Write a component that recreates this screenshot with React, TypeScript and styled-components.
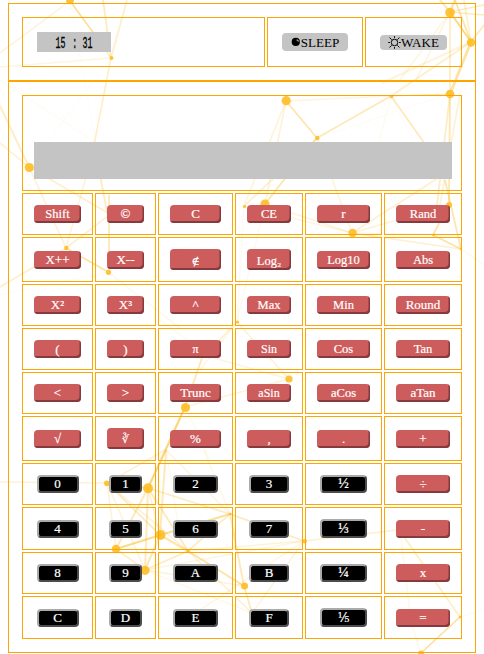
import React from 'react';
import styled, { createGlobalStyle } from 'styled-components';

const Global = createGlobalStyle`
  * { box-sizing: border-box; }
  html, body { margin: 0; background: #fff; overflow: hidden; }
  body { font-family: "Liberation Serif", "DejaVu Serif", serif; }
`;

const Page = styled.main`
  position: relative;
  width: 484px;
  height: 654px;
  padding: 3px 8px 0;
  overflow: hidden;
`;

const Backdrop = styled.svg`
  position: absolute;
  inset: 0;
`;

const Panel = styled.section`
  position: relative;
  width: 468px;
  border: 1px solid #ffa500;
  padding: 13px;
`;

const Header = styled(Panel)`
  display: grid;
  grid-template-columns: 243px 96px 97px;
  gap: 2px;
  height: 78px;
`;

const Body = styled(Panel)`
  height: 572px;
`;

const Cell = styled.div`
  border: 1px solid #ffa500;
  display: flex;
  min-width: 0;
  align-items: center;
  justify-content: center;
`;

const ClockCell = styled(Cell)`
  justify-content: flex-start;
  align-items: flex-start;
  padding: 14px;
`;

const Clock = styled.time`
  display: grid;
  grid-template-columns: 10px 17px 9px;
  justify-content: center;
  justify-items: center;
  width: 74px;
  height: 20px;
  background: #c4c4c4;
  font: 16px/24px "Liberation Mono", monospace;
  color: #000;
`;

const Digits = styled.span`
  display: block;
  width: max-content;
  transform: scaleX(0.52);
  -webkit-text-stroke: 0.3px #000;
`;

const PowerButton = styled.button<{ $height: number; $width: number }>`
  display: flex;
  align-items: center;
  justify-content: center;
  width: ${p => p.$width}px;
  height: ${p => p.$height}px;
  padding: 0;
  border: 0;
  border-radius: 4px;
  background: #c4c4c4;
  color: #000;
  font: 13.1px/15px "Liberation Serif", serif;
`;

const Display = styled.div`
  height: 96px;
  border: 1px solid #ffa500;
  padding: 46px 9px 11px 11px;
  margin-bottom: 2px;
`;

const Screen = styled.output`
  display: block;
  height: 37px;
  background: #c4c4c4;
`;

const Keypad = styled.div`
  display: grid;
  grid-template-columns: 71px 61px 75px 68px 77px 78px;
  grid-template-rows: 42px 45px 42px 42px 42px 45px 42px 43px 42px 43px;
  gap: 2px;
`;

const KeyCell = styled(Cell)<{ $row: number }>`
  align-items: flex-start;
  padding-top: ${p => [11, 13, 11, 11, 11, 13, 11, 12, 11, 12][p.$row]}px;
`;

const Key = styled.button<{ $lift: number; $grow: number; $dy: number; $size: number }>`
  display: flex;
  justify-content: center;
  height: ${p => 18 + p.$grow}px;
  margin: -${p => p.$lift}px 0 0;
  padding: ${p => p.$lift + p.$dy}px 0 0;
  color: #fff;
  font: ${p => p.$size}px/14px "Liberation Serif", "DejaVu Serif", serif;
  -webkit-text-stroke: 0.2px #fff;
  white-space: nowrap;
`;

const OperatorKey = styled(Key)<{ $col: number }>`
  width: ${p => [47, 37, 51, 44, 53, 54][p.$col]}px;
  border: 0;
  border-radius: 4px;
  background: #cd5c5c;
  box-shadow: inset -1.5px -2px 0 #853b3d;
`;

const DigitKey = styled(Key)<{ $col: number }>`
  width: ${p => [42, 33, 45, 40, 47, 47][p.$col]}px;
  border: 2px solid;
  border-color: #aaa #4c4c4c #4c4c4c #aaa;
  border-radius: 4px;
  background: #000;
  padding-top: ${p => p.$lift}px;
`;

type Spec = { t: string; dark?: boolean; lift?: number; grow?: number; dy?: number; size?: number };
const k = (t: string, o: Omit<Spec, 't'> = {}): Spec => ({ t, ...o });
const d = (t: string, o: Omit<Spec, 't'> = {}): Spec => ({ t, dark: true, ...o });

const rows: Spec[][] = [
  [k('Shift', { size: 12.5 }), k('©'), k('C'), k('CE', { size: 12.5 }), k('r'), k('Rand', { size: 12.5 })],
  [k('X++'), k('X--'), k('∉', { lift: 2, grow: 3, dy: 3, size: 11 }), k('Log₂', { lift: 2, grow: 3, dy: 3, size: 12.5 }), k('Log10', { size: 12.5 }), k('Abs', { size: 12.5 })],
  [k('X²'), k('X³'), k('^'), k('Max', { size: 12.5 }), k('Min', { size: 12.5 }), k('Round')],
  [k('(', { dy: 3 }), k(')', { dy: 3 }), k('π', { size: 12 }), k('Sin', { size: 12 }), k('Cos', { size: 12.5 }), k('Tan', { size: 12.5 })],
  [k('<'), k('>'), k('Trunc'), k('aSin', { size: 12 }), k('aCos', { size: 12.5 }), k('aTan')],
  [k('√'), k('∛', { lift: 2, grow: 3, dy: 2, size: 11 }), k('%'), k(','), k('.'), k('+')],
  [d('0'), d('1'), d('2'), d('3'), d('½', { size: 14 }), k('÷')],
  [d('4'), d('5'), d('6'), d('7'), d('⅓', { lift: 1, grow: 1, size: 14 }), k('-')],
  [d('8'), d('9'), d('A'), d('B'), d('¼', { size: 14 }), k('x')],
  [d('C'), d('D'), d('E'), d('F'), d('⅕', { lift: 1, grow: 1, size: 12 }), k('=')],
];

const nodes: number[][] = [
  [70, 0, 4], [111.5, 58, 2], [450, 12.5, 4.8], [471, 42.5, 4.2], [450, 94, 4.3], [391.5, 96.5, 1.8],
  [286.2, 100.7, 4.6], [317.3, 138, 2.2], [29.3, 167.5, 4.6], [244.5, 206.5, 1.6], [265, 204, 4.6],
  [449, 205, 3], [352.6, 233, 4.2], [66.3, 248, 2.2], [108.5, 272.3, 2.6], [237.6, 322, 1.6],
  [289, 379, 3.6], [185.5, 407.5, 4.6], [106.8, 483.3, 2.8], [148, 488.3, 5], [230.5, 514, 1.3],
  [160.5, 535, 5], [116, 549, 4.2], [145, 570.3, 4.6], [188, 551, 1.8], [304.7, 541.3, 2.2],
  [244.5, 586, 3.5], [421, 653.5, 3], [460, 617, 1.2], [461, 249, 1.2], [433.5, 235, 1.3],
];

// x1, y1, x2, y2, opacity, stroke width
const links: number[][] = [
  [70, 1, 95, 35, .45, 1.6], [95, 35, 111, 58, .35, 1.3], [70, 1, 0, 53, .18, 1.5], [103, 0, 111, 58, .28, 1.8],
  [127, 0, 111, 58, .22, 1.8], [111, 58, 0, 67, .14, 1.5], [111, 58, 94, 145, .24, 1.6], [111, 58, 45, 145, .05, 1],
  [70, 1, 96, 145, .04, 1], [0, 80, 95, 142, .07, 1], [0, 106, 29, 167, .26, 1.8], [0, 143, 29, 167, .2, 1.6],
  [29, 167, 66, 248, .2, 1.5], [29, 167, 108, 213, .22, 1.6], [88, 170, 66, 248, .18, 1.4], [99, 170, 108, 217, .28, 1.7],
  [66, 248, 108, 216, .25, 1.5], [66, 248, 108, 272, .4, 1.7], [109, 195, 109, 272, .28, 2], [66, 248, 0, 287, .22, 1.7],
  [108, 272, 180, 328, .1, 1.2], [108, 272, 237, 230, .04, 1], [0, 295, 108, 272, .05, 1],
  [450, 12, 471, 42, .55, 1.8], [450, 12, 484, 15, .28, 1.7], [450, 12, 440, 0, .3, 2.2], [450, 12, 455, 0, .4, 2.2],
  [450, 12, 484, 5, .28, 1.7], [455, 0, 471, 42, .38, 1.7], [464, 0, 471, 42, .22, 1.7], [471, 42, 484, 25, .28, 2],
  [471, 42, 450, 94, .4, 2.8], [471, 42, 391, 96, .22, 2], [471, 42, 382, 83, .15, 2], [450, 12, 450, 94, .25, 1.8],
  [450, 12, 416, 80, .15, 1.5], [450, 12, 400, 80, .12, 1.5], [391, 96, 450, 94, .35, 1.2],
  [391, 96, 286, 101, .14, 1.6], [391, 96, 317, 138, .3, 1.8], [286, 101, 317, 138, .38, 1.6],
  [391, 96, 449, 178, .3, 1.7], [391, 96, 374, 160, .08, 1], [391, 96, 420, 154, .05, 1], [317, 138, 460, 90, .05, 1],
  [317, 138, 265, 204, .35, 1.8], [317, 138, 244, 206, .22, 1.7], [286, 101, 265, 204, .17, 1.7], [286, 101, 244, 206, .15, 1.7],
  [317, 138, 352, 233, .15, 1.6], [450, 94, 437, 205, .25, 1.8], [450, 94, 449, 205, .35, 1.8], [460, 94, 440, 205, .18, 1.7],
  [352, 233, 449, 171, .2, 1.6], [352, 233, 461, 249, .2, 1.6], [352, 233, 265, 204, .17, 1.6], [352, 233, 244, 206, .14, 1.6],
  [352, 233, 449, 205, .17, 1.6], [352, 233, 460, 235, .12, 1.3], [449, 205, 433, 235, .38, 1.7], [433, 235, 461, 249, .4, 1.7],
  [445, 180, 461, 249, .35, 1.8], [461, 249, 484, 265, .1, 1.3], [244, 206, 237, 322, .08, 1.4], [265, 204, 237, 322, .08, 1.3],
  [237, 322, 205, 355, .22, 1.7], [237, 322, 289, 379, .18, 1.5], [203, 355, 289, 379, .15, 1.5], [289, 379, 185, 407, .17, 1.6],
  [203, 355, 185, 407, .33, 1.8], [237, 322, 200, 370, .12, 1.4], [160, 320, 205, 353, .08, 1.2],
  [185, 407, 148, 488, .42, 2.2], [185, 407, 166, 450, .28, 1.7], [185, 407, 210, 460, .08, 1.3],
  [107, 483, 166, 449, .14, 1.3], [107, 483, 148, 488, .3, 1.5], [107, 483, 0, 482, .18, 1.4], [107, 483, 116, 549, .18, 1.5],
  [107, 483, 145, 570, .16, 1.5], [107, 483, 160, 535, .27, 1.8], [107, 483, 188, 551, .2, 1.5],
  [166, 450, 148, 488, .3, 1.6], [166, 450, 160, 535, .3, 2], [166, 450, 107, 483, .12, 1.3], [166, 450, 180, 535, .1, 1.2],
  [166, 450, 230, 514, .15, 1.3], [204, 450, 230, 514, .13, 1.3], [148, 488, 116, 549, .3, 2], [148, 488, 145, 570, .28, 2],
  [148, 488, 188, 551, .3, 1.8], [148, 488, 160, 535, .2, 1.5], [148, 488, 230, 514, .28, 1.6], [160, 535, 116, 549, .38, 2.2],
  [160, 535, 145, 570, .32, 2], [160, 535, 230, 514, .32, 2], [160, 535, 188, 551, .35, 2.2], [116, 549, 230, 514, .22, 1.4],
  [116, 549, 145, 570, .28, 1.5], [145, 570, 188, 551, .28, 1.6], [145, 570, 244, 586, .17, 1.5], [188, 551, 244, 586, .38, 2],
  [188, 551, 230, 514, .3, 1.6], [188, 551, 304, 541, .17, 1.5], [145, 570, 304, 541, .14, 1.4], [230, 514, 304, 541, .28, 1.7],
  [230, 514, 244, 586, .3, 1.9], [188, 551, 252, 613, .2, 1.5], [145, 570, 252, 613, .12, 1.3], [304, 541, 200, 610, .14, 1.5],
  [304, 541, 252, 613, .15, 1.5], [304, 541, 398, 530, .2, 1.7], [244, 586, 252, 613, .32, 1.6],
  [402, 534, 460, 617, .23, 1.7], [400, 530, 411, 622, .1, 1.4], [411, 622, 421, 653, .1, 1.4], [421, 653, 460, 617, .42, 1.7],
  [460, 617, 484, 609, .07, 1],
];

function Constellation() {
  return (
    <Backdrop width="484" height="654" viewBox="0 0 484 654" aria-hidden="true">
      {links.map(([x1, y1, x2, y2, o, w], i) => (
        <line key={i} x1={x1} y1={y1} x2={x2} y2={y2} stroke="#f9b61b" strokeOpacity={o} strokeWidth={w} />
      ))}
      {nodes.map(([x, y, r], i) => (
        <circle key={i} cx={x} cy={y} r={r} fill="#ffbe28" fillOpacity=".92" />
      ))}
    </Backdrop>
  );
}

function MoonIcon() {
  return (
    <svg width="10" height="10" viewBox="0 0 10 10" aria-hidden="true">
      <circle cx="4.8" cy="4.9" r="4.1" fill="#000" />
      <path d="M5.6 2.6h1.2v1h1.4v.9H6.6v-.8h-1Z" fill="#c4c4c4" />
    </svg>
  );
}

function SunIcon() {
  return (
    <svg width="13" height="13" viewBox="0 0 12 12" fill="none" stroke="#000" strokeWidth=".9" aria-hidden="true">
      <circle cx="6" cy="6" r="3" />
      <path d="M6 .2v1.6M6 10.2v1.6M.2 6h1.6M10.2 6h1.6M1.4 1.4l2 2M8.6 8.6l2 2M1.4 10.6l2-2M8.6 3.4l2-2" />
    </svg>
  );
}

export default function App() {
  return (
    <Page>
      <Global />
      <Constellation />
      <Header>
        <ClockCell>
          <Clock><Digits>15</Digits><Digits>:</Digits><Digits>31</Digits></Clock>
        </ClockCell>
        <Cell><PowerButton $width={66} $height={18}><MoonIcon />SLEEP</PowerButton></Cell>
        <Cell><PowerButton $width={67} $height={15}><SunIcon />WAKE</PowerButton></Cell>
      </Header>
      <Body>
        <Display><Screen /></Display>
        <Keypad>
          {rows.map((row, r) => row.map((spec, c) => {
            const Button = spec.dark ? DigitKey : OperatorKey;
            return (
              <KeyCell key={`${r}-${c}`} $row={r}>
                <Button $col={c} $lift={spec.lift ?? 0} $grow={spec.grow ?? 0} $dy={spec.dy ?? 2} $size={spec.size ?? 13}>
                  {spec.t}
                </Button>
              </KeyCell>
            );
          }))}
        </Keypad>
      </Body>
    </Page>
  );
}
